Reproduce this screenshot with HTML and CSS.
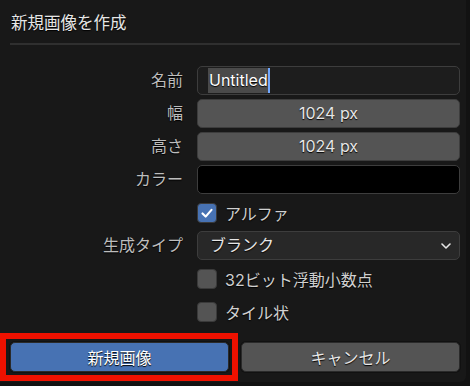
FILE: index.html
```html
<!DOCTYPE html>
<html lang="ja">
<head>
    <meta charset="UTF-8">
    <meta name="viewport" content="width=device-width, initial-scale=1.0">
    <title>新規画像を作成</title>
    <link rel="stylesheet" href="styles.css">
</head>
<body>
    <div class="dialog">
        <div class="title">新規画像を作成</div>
        <div class="divider"></div>

        <div class="form">
            <label class="label">名前</label>
            <div class="field text-field">
                <span class="selected">Untitled</span><span class="caret"></span>
            </div>

            <label class="label">幅</label>
            <div class="field number">1024 px</div>

            <label class="label">高さ</label>
            <div class="field number">1024 px</div>

            <label class="label">カラー</label>
            <div class="field color"></div>

            <span></span>
            <div class="check-row">
                <span class="box checked">
                    <svg viewBox="0 0 20 20" width="20" height="20">
                        <path d="M5 10.5 L8.5 14 L15 6.5" fill="none" stroke="#fff" stroke-width="2.4" stroke-linecap="round" stroke-linejoin="round"/>
                    </svg>
                </span>
                <span>アルファ</span>
            </div>

            <label class="label">生成タイプ</label>
            <div class="field select">
                <span>ブランク</span>
                <svg class="chevron" viewBox="0 0 10 6" width="10" height="6">
                    <path d="M1 1 L5 5 L9 1" fill="none" stroke="#e6e6e6" stroke-width="1.6" stroke-linecap="round" stroke-linejoin="round"/>
                </svg>
            </div>

            <span></span>
            <div class="check-row">
                <span class="box"></span>
                <span>32ビット浮動小数点</span>
            </div>

            <span></span>
            <div class="check-row">
                <span class="box"></span>
                <span>タイル状</span>
            </div>
        </div>

        <div class="actions">
            <button class="btn primary">新規画像</button>
            <button class="btn">キャンセル</button>
            <div class="highlight"></div>
        </div>
    </div>
</body>
</html>
```

FILE: styles.css
```css
* {
    margin: 0;
    padding: 0;
    box-sizing: border-box;
}

body {
    background: #121212;
    font-family: Inter, "Noto Sans CJK JP", sans-serif;
    font-size: 16px;
    color: #e6e6e6;
    width: 470px;
    height: 386px;
    overflow: hidden;
}

.dialog {
    width: 466px;
    height: 382px;
    background: #181818;
    border-radius: 0 0 6px 0;
    padding: 0 6px 0 10px;
}

.title {
    height: 44px;
    padding: 10px 0 0 1px;
    font-size: 16.5px;
    color: #e6e6e6;
    text-shadow: 0 1px 1px #000;
}

.divider {
    height: 2px;
    background: #2f2f2f;
    margin-top: -1px;
}

.form {
    display: grid;
    grid-template-columns: 173px 263px;
    column-gap: 14px;
    row-gap: 4px;
    grid-auto-rows: 29px;
    margin-top: 21px;
}

.label {
    text-align: right;
    line-height: 29px;
    color: #bdbdbd;
    text-shadow: 0 1px 1px #000;
    white-space: nowrap;
}

.field {
    border: 1px solid #3d3d3d;
    border-radius: 5px;
    line-height: 27px;
    text-shadow: 0 1px 1px #000;
}

.text-field {
    background: #1d1d1d;
    padding-left: 10px;
    display: flex;
    align-items: stretch;
}

.selected {
    background: #4a4a4a;
    color: #fff;
    padding-left: 1px;
    margin-top: 1px;
    margin-bottom: 1px;
    line-height: 25px;
}

.caret {
    width: 2px;
    background: #71a8ff;
    margin-top: 1px;
    margin-bottom: 1px;
}

.number {
    background: #545454;
    text-align: center;
}

.color {
    background: #000;
}

.select {
    background: #282828;
    padding: 0 8px 0 12px;
    display: flex;
    align-items: center;
    justify-content: space-between;
}

.chevron {
    margin-top: 1px;
}

.check-row {
    display: flex;
    align-items: center;
    gap: 8px;
    color: #d0d0d0;
    text-shadow: 0 1px 1px #000;
}

.box {
    width: 20px;
    height: 20px;
    border-radius: 4px;
    background: #545454;
    border: 1px solid #3a3a3a;
    display: flex;
    align-items: center;
    justify-content: center;
}

.box.checked {
    background: #4772b3;
}

.box svg {
    display: block;
}

.actions {
    position: relative;
    display: grid;
    grid-template-columns: 219px 219px;
    column-gap: 12px;
    margin-top: 16px;
}

.btn {
    height: 30px;
    border: 1px solid #2a2a2a;
    border-radius: 5px;
    background: #545454;
    color: #e6e6e6;
    font-family: Inter, "Noto Sans CJK JP", sans-serif;
    font-size: 16px;
    text-shadow: 0 1px 1px #000;
    box-shadow: 0 0 0 1px #111;
}

.btn.primary {
    background: #4772b3;
    color: #fff;
}

.highlight {
    position: absolute;
    left: -10px;
    top: -9px;
    width: 238px;
    height: 48px;
    border: 6px solid #ee1100;
    pointer-events: none;
}
```
